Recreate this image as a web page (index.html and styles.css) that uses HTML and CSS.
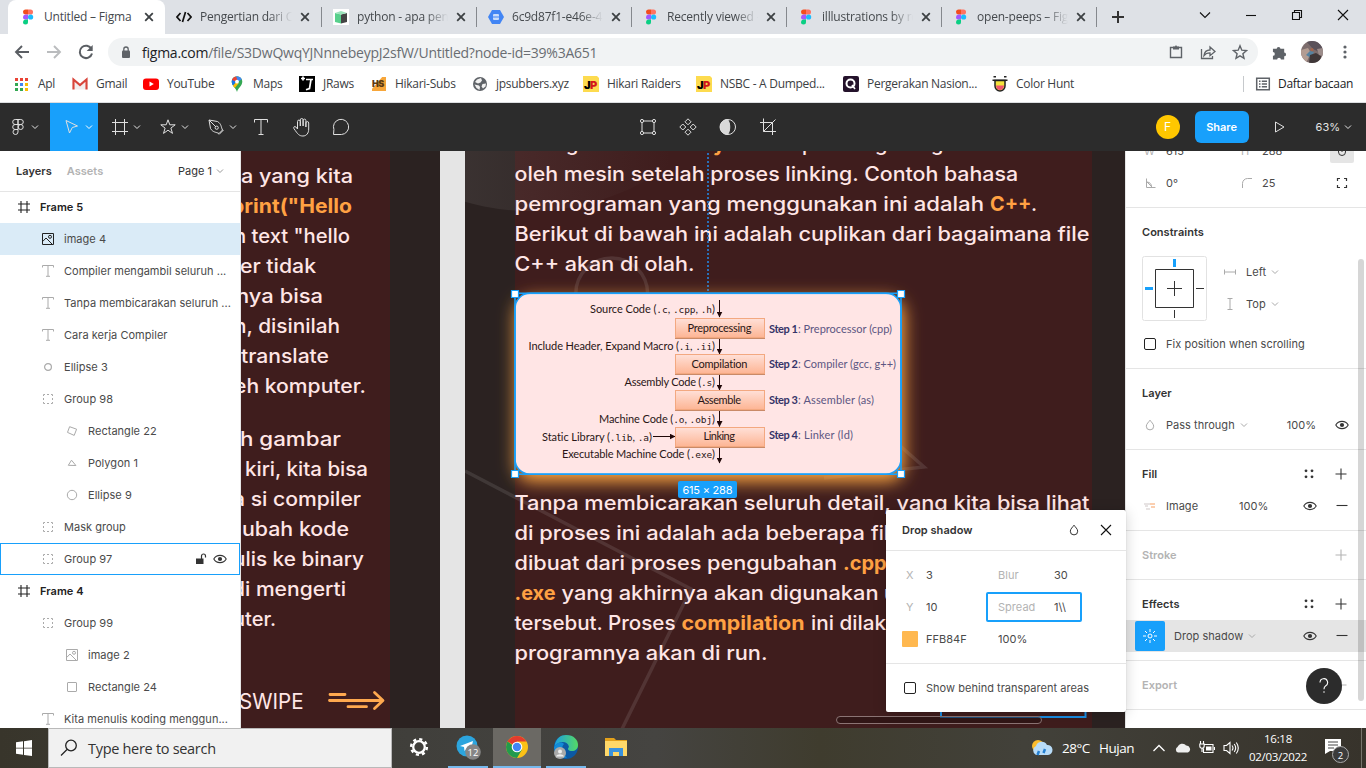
FILE: index.html
```html
<!DOCTYPE html>
<html lang="id">
<head>
<meta charset="utf-8">
<title>Untitled – Figma</title>
<link rel="stylesheet" href="styles.css">
</head>
<body>
<svg class="sprite" aria-hidden="true">
  <symbol id="figma" viewBox="0 0 16 16"><path fill="#f24e1e" d="M3 3a2.6 2.6 0 0 1 2.6-2.6H8v5.1H5.6A2.6 2.6 0 0 1 3 3z"/><path fill="#ff7262" d="M8 .4h2.5a2.55 2.55 0 0 1 0 5.1H8z"/><path fill="#a259ff" d="M3 8a2.6 2.6 0 0 1 2.6-2.5H8v5.1H5.6A2.6 2.6 0 0 1 3 8z"/><circle fill="#1abcfe" cx="10.6" cy="8" r="2.6"/><path fill="#0acf83" d="M3 13a2.6 2.6 0 0 1 2.6-2.5H8V13a2.5 2.5 0 0 1-5 0z"/></symbol>
  <symbol id="close" viewBox="0 0 16 16"><path d="M4.2 4.2l7.6 7.6M11.8 4.2l-7.6 7.6" fill="none" stroke="#3c4043" stroke-width="1.8"/></symbol>
  <symbol id="chev" viewBox="0 0 8 8"><path d="M1 2.5l3 3 3-3" fill="none" stroke="currentColor"/></symbol>
  <symbol id="frame" viewBox="0 0 12 12"><path d="M3 0v12M9 0v12M0 3h12M0 9h12" fill="none" stroke="currentColor" stroke-width="1.1"/></symbol>
  <symbol id="text" viewBox="0 0 12 12"><path d="M.5 2.5v-2h11v2M6 .5v10.5M4 11.3h4" fill="none" stroke="currentColor"/></symbol>
  <symbol id="image" viewBox="0 0 12 12"><path d="M.5.5h11v11H.5zM.8 8.4L4 5l6.5 6.5" fill="none" stroke="currentColor"/><circle cx="8" cy="3.8" r="1.5" fill="none" stroke="currentColor"/></symbol>
  <symbol id="group" viewBox="0 0 12 12"><path d="M1.5 3V1.5H3M5 1.5h2M9 1.5h1.5V3M10.5 5v2M10.5 9v1.5H9M7 10.5H5M3 10.5H1.5V9M1.5 7V5" fill="none" stroke="currentColor"/></symbol>
  <symbol id="dot" viewBox="0 0 12 12"><circle cx="6" cy="6" r="3.4" fill="none" stroke="currentColor" stroke-width="1.2"/></symbol>
  <symbol id="circle" viewBox="0 0 12 12"><circle cx="6" cy="6" r="4.7" fill="none" stroke="currentColor"/></symbol>
  <symbol id="rect" viewBox="0 0 12 12"><rect x="1.5" y="1.5" width="9" height="9" rx=".5" fill="none" stroke="currentColor"/></symbol>
  <symbol id="tilt" viewBox="0 0 12 12"><path d="M3.6 1.7l7 2.5-2.4 6.2-6.700-3z" fill="none" stroke="currentColor"/></symbol>
  <symbol id="poly" viewBox="0 0 12 12"><path d="M5.5 3.2L2.3 8.3l7.6.2z" fill="none" stroke="currentColor"/></symbol>
  <symbol id="eye" viewBox="0 0 14 10"><path d="M.8 5C3.5.2 10.5.2 13.2 5 10.5 9.8 3.5 9.8.8 5z" fill="none" stroke="currentColor" stroke-width="1.1"/><circle cx="7" cy="5" r="2.1" fill="currentColor"/></symbol>
  <symbol id="plus" viewBox="0 0 12 12"><path d="M6 .5v11M.5 6h11" fill="none" stroke="currentColor" stroke-width="1.1"/></symbol>
  <symbol id="minus" viewBox="0 0 12 12"><path d="M.5 5.5h11" fill="none" stroke="currentColor" stroke-width="1.1"/></symbol>
  <symbol id="dots" viewBox="0 0 12 12"><g fill="currentColor"><circle cx="3" cy="2.8" r="1.4"/><circle cx="9" cy="2.8" r="1.4"/><circle cx="3" cy="8.8" r="1.4"/><circle cx="9" cy="8.8" r="1.4"/></g></symbol>
  <symbol id="drop" viewBox="0 0 12 12"><path d="M6 1.2C4.8 3 2.3 5 2.3 7.2a3.7 3.7 0 0 0 7.4 0C9.7 5 7.2 3 6 1.2z" fill="none" stroke="currentColor"/></symbol>
  <symbol id="jp" viewBox="0 0 16 16"><path d="M0 0h14l2 2v14H0z" fill="#fddb4f"/></symbol>
</svg>

<header class="tabstrip">
  <div class="tab active"><svg class="fav"><use href="#figma"/></svg><span class="title">Untitled – Figma</span><svg class="x"><use href="#close"/></svg></div>
  <div class="tab"><svg class="fav" viewBox="0 0 16 16"><path d="M4.5 4L1 8l3.5 4M11.5 4L15 8l-3.5 4M9.5 3l-3 10" fill="none" stroke="#111" stroke-width="1.7"/></svg><span class="title">Pengertian dari Co</span><svg class="x"><use href="#close"/></svg></div>
  <div class="tab"><svg class="fav" viewBox="0 0 16 16"><path fill="#fff" d="M0 0h16v16H0z"/><path fill="#58d08c" d="M2 4l6 1.5v9L2 13z"/><path fill="#444" d="M8 5.5L14 4v9l-6 1.5z"/><path fill="#9be3ba" d="M2 4l6-2 6 2-6 1.5z"/></svg><span class="title">python - apa peng</span><svg class="x"><use href="#close"/></svg></div>
  <div class="tab"><svg class="fav" viewBox="0 0 16 16"><path fill="#4285f4" d="M4 1h8l4 7-4 7H4L0 8z"/><rect x="5" y="5" width="6" height="6" rx="1" fill="#c9dcfb"/><path d="M5 8h6" stroke="#4285f4"/></svg><span class="title">6c9d87f1-e46e-4b</span><svg class="x"><use href="#close"/></svg></div>
  <div class="tab"><svg class="fav"><use href="#figma"/></svg><span class="title">Recently viewed – F</span><svg class="x"><use href="#close"/></svg></div>
  <div class="tab"><svg class="fav"><use href="#figma"/></svg><span class="title">illlustrations by re</span><svg class="x"><use href="#close"/></svg></div>
  <div class="tab"><svg class="fav"><use href="#figma"/></svg><span class="title">open-peeps – Figm</span><svg class="x"><use href="#close"/></svg></div>
  <svg class="newtab" viewBox="0 0 14 14"><path d="M7 1v12M1 7h12" stroke="#333" stroke-width="2"/></svg>
  <div class="winctl">
    <svg viewBox="0 0 12 12"><path d="M1 3.500l5 5 5-5"/></svg>
    <svg viewBox="0 0 12 12"><path d="M1 6.500h10"/></svg>
    <svg viewBox="0 0 12 12"><path d="M1.500 3.500h7v7h-7zM3.500 3.500v-2h7v7h-2"/></svg>
    <svg viewBox="0 0 12 12"><path d="M1 1l10 10M11 1L1 11"/></svg>
  </div>
</header>

<div class="addressbar">
  <svg class="nav" viewBox="0 0 16 16"><path d="M8 2L2 8l6 6M2 8h13" fill="none" stroke="#5a5e63" stroke-width="1.9"/></svg>
  <svg class="nav" viewBox="0 0 16 16"><path d="M8 2l6 6-6 6M14 8H1" fill="none" stroke="#babcbe" stroke-width="1.9"/></svg>
  <svg class="nav" viewBox="0 0 16 16"><path d="M13.500 5A6.200 6.200 0 1 0 14 9.500" fill="none" stroke="#5a5e63" stroke-width="2"/><path d="M14.700 1v6h-6z" fill="#5a5e63"/></svg>
  <div class="omnibox">
    <svg class="lock" viewBox="0 0 10 13"><rect x="1" y="4.500" width="8" height="7.500" rx="1" fill="#5f6368"/><path d="M2.800 5V3.200a2.200 2.200 0 0 1 4.400 0V5" fill="none" stroke="#5f6368" stroke-width="1.300"/></svg>
    <span class="url"><b>figma.com</b>/file/S3DwQwqYJNnnebeypJ2sfW/Untitled?node-id=39%3A651</span>
    <svg class="oi" viewBox="0 0 16 16"><path d="M2.500 3.500h11v10h-11z" fill="none" stroke="#5f6368" stroke-width="1.400"/><path d="M5 2.500h2l1-1.500 1 1.500h2v3H5z" fill="#5f6368"/></svg>
    <svg class="oi" viewBox="0 0 16 16"><path d="M1.500 5v9.500h11V12M4 11.500C4.500 7.500 7 6 10 6V3l5 4.500-5 4.200V8.800C7.500 8.800 5.500 9.500 4 11.500z" fill="none" stroke="#5f6368" stroke-width="1.300"/></svg>
    <svg class="oi" viewBox="0 0 16 16"><path d="M8 1.800l1.800 4.400 4.700.4-3.600 3.100 1.100 4.600L8 11.800l-4 2.500 1.100-4.600L1.500 6.600l4.700-.4z" fill="none" stroke="#5f6368" stroke-width="1.400"/></svg>
  </div>
  <svg class="puzzle" viewBox="0 0 16 16"><path fill="#5f6368" d="M1 4h4a2 2 0 1 1 4 0h4v4a2 2 0 1 1 0 4v3.500H9.500a2 2 0 1 0-4 0H1V11.500a2 2 0 1 0 0-4z"/></svg>
  <svg class="avatar" viewBox="0 0 22 22"><clipPath id="av"><circle cx="11" cy="11" r="11"/></clipPath><g clip-path="url(#av)"><path fill="#7d6d6d" d="M0 0h22v22H0z"/><path fill="#b39c92" d="M0 9l7-2 3 5-5 10H0z"/><path fill="#5b525a" d="M5 0h11l6 6-4 5-6-3z"/><path fill="#57829f" d="M5 14l4-4 4 1-3 6z"/><path fill="#3f3738" d="M9 14l6-2 5 3-1 7H8z"/><circle cx="11" cy="8.500" r="1.600" fill="#a5664d"/><path fill="#9c8c8a" d="M16 8l6-1v8l-4-1z"/></g></svg>
  <svg class="more" viewBox="0 0 4 16"><g fill="#5f6368"><circle cx="2" cy="3" r="1.600"/><circle cx="2" cy="8" r="1.600"/><circle cx="2" cy="13" r="1.600"/></g></svg>
</div>

<nav class="bookmarks">
  <a><svg viewBox="0 0 16 16"><path fill="#ea4335" d="M1 2h3v3H1zM6 2h3v3H6zM11 2h3v3h-3z"/><path fill="#34a853" d="M1 7h3v3H1zM1 12h3v3H1zM6 12h3v3H6z"/><path fill="#4285f4" d="M6 7h3v3H6z"/><path fill="#fbbc04" d="M11 7h3v3h-3zM11 12h3v3h-3z"/></svg>Apl</a>
  <a><svg viewBox="0 0 16 16"><path d="M3 4v9.500h10V4L8 8.500z" fill="#f2eeee"/><path d="M1.500 13.500v-10L8 9l6.500-5.500v10" fill="none" stroke="#d8453b" stroke-width="2.200"/></svg>Gmail</a>
  <a><svg viewBox="0 0 16 16"><rect y="2.500" width="16" height="11.500" rx="3" fill="red"/><path fill="#fff" d="M6.500 5.500v5l4.300-2.500z"/></svg>YouTube</a>
  <a><svg viewBox="0 0 16 16"><clipPath id="pin"><path d="M8 16c-1-4-5.300-6-5.300-10.500a5.300 5.300 0 0 1 10.600 0C13.300 10 9 12 8 16z"/></clipPath><g clip-path="url(#pin)"><path fill="#34a853" d="M0 0h16v16H0z"/><path fill="#fbbc04" d="M2 11l6-6 1.500 2.500L5 13z"/><path fill="#1a73e8" d="M0 9V3l5-1 3 3-4 4.500z"/><path fill="#ea4335" d="M2 0h5L9 4 6.500 5.500 2 3.500z"/><path fill="#4285f4" d="M7 0h6v3L9 6z"/></g><circle cx="8" cy="5.700" r="1.900" fill="#fff"/></svg>Maps</a>
  <a><svg viewBox="0 0 16 16"><path d="M0 0h16v16H0z"/><path d="M7 3.500h7M12 3.500l-1.500 9-3.500 1.300M2 2.500h4M4 .5v4" fill="none" stroke="#fff" stroke-width="1.700"/></svg>JRaws</a>
  <a><svg viewBox="0 0 16 16"><path fill="#f7a63a" d="M1 1h14v14H1z"/><path fill="#fff" d="M0 0h12L0 14z"/><text x="1" y="10.500" class="hs">HS</text></svg>Hikari-Subs</a>
  <a><svg viewBox="0 0 16 16"><circle cx="8" cy="8" r="7" fill="#5f6368"/><path d="M9 2l-4 1.500L3 6l3 1.500 2.500-1L10 4.500zM2.500 8.500L7 9.500 8 11l-.5 3-3-2zM10.500 8l3.500-.5-.5 3-2.500 2-1.500-2z" fill="#f1f1f1"/></svg>jpsubbers.xyz</a>
  <a><svg viewBox="0 0 16 16"><use href="#jp"/><text x="1" y="12.500" class="jpt">J<tspan fill="#d5151b">P</tspan></text></svg>Hikari Raiders</a>
  <a><svg viewBox="0 0 16 16"><use href="#jp"/><text x="1" y="12.500" class="jpt">J<tspan fill="#d5151b">P</tspan></text></svg>NSBC - A Dumped...</a>
  <a><svg viewBox="0 0 16 16"><rect width="16" height="16" rx="2" fill="#24122b"/><circle cx="7.500" cy="7.500" r="4" fill="none" stroke="#fff" stroke-width="2"/><path d="M9 9l3 4" stroke="#fff" stroke-width="1.600"/></svg>Pergerakan Nasion...</a>
  <a><svg viewBox="0 0 16 16"><path d="M3 4.500V10a5 5 0 0 0 10 0V4.500z" fill="#f6e43c" stroke="#222" stroke-width="1.500"/><path d="M4 9.500h8a4 4.500 0 0 1-8 0z" fill="#f2566e"/><path d="M1.500.8h2.500M12 .8h2.500M.5 4.300h15" stroke="#222" stroke-width="1.500"/></svg>Color Hunt</a>
  <a class="reading"><svg viewBox="0 0 16 16"><path d="M1.700 2.200h12.600v11.600H1.700z" fill="none" stroke="#5f6368" stroke-width="1.500"/><path d="M4 5.200h1.500M4 8h1.500M4 10.800h1.500M6.800 5.200H12M6.800 8H12M6.800 10.800H12" stroke="#5f6368" stroke-width="1.400"/></svg>Daftar bacaan</a>
</nav>

<div class="toolbar">
  <div class="tool menu"><svg class="i18" viewBox="0 0 18 18"><path d="M9 1.500H6.200a2.500 2.500 0 0 0 0 5H9zM9 1.500h2.800a2.500 2.500 0 0 1 0 5H9zM9 6.500H6.200a2.500 2.500 0 0 0 0 5H9zM6.200 11.500A2.500 2.500 0 1 0 9 14v-2.500z"/><circle cx="11.700" cy="9" r="2.500"/></svg><svg class="c"><use href="#chev"/></svg></div>
  <div class="tool sel"><svg class="i18" viewBox="0 0 18 18"><path d="M3 2.500l11.500 5.500-5.200 1.500-2.800 5.500z"/></svg><svg class="c"><use href="#chev"/></svg></div>
  <div class="tool"><svg class="i18" viewBox="0 0 18 18"><path d="M4.500 1v16M13.500 1v16M1 4.500h16M1 13.500h16"/></svg><svg class="c"><use href="#chev"/></svg></div>
  <div class="tool"><svg class="i18" viewBox="0 0 18 18"><path d="M9 1.800l1.800 5h5.400l-4.300 3.300 1.600 5.300L9 12.200l-4.500 3.200 1.600-5.300L1.800 6.800h5.400z"/></svg><svg class="c"><use href="#chev"/></svg></div>
  <div class="tool"><svg class="i18" viewBox="0 0 18 18"><path d="M2 2l8.500 1.500C14.500 6 14 9 15.500 12L12 15.500C9 14 6 14.500 3.500 10.500zM2 2l7 7M12 16.500l4.500-4.500"/><circle cx="9.700" cy="9.700" r="1.600"/></svg><svg class="c"><use href="#chev"/></svg></div>
  <div class="tool one"><svg class="i18" viewBox="0 0 18 18"><path d="M2.500 4.500v-3h13v3M9 1.500v15M6.500 16.500h5"/></svg></div>
  <div class="tool one hand"><svg class="i20" viewBox="0 0 20 20"><path d="M5.500 12V4.500a1.400 1.400 0 0 1 2.800 0V9 2.900a1.400 1.400 0 0 1 2.800 0V9 3.500a1.400 1.400 0 0 1 2.800 0V10 6a1.400 1.400 0 0 1 2.800 0v6c0 4-2 7-5.800 7-3.500 0-5-1.500-9-7.500-.8-1.800 1-2.500 2-1.500L5.500 12"/></svg></div>
  <div class="tool one talk"><svg class="i18" viewBox="0 0 18 18"><path d="M1.500 16.500l.4-5A7.600 7.600 0 1 1 9.500 16.500z"/></svg></div>
  <div class="mid">
    <svg class="i18" viewBox="0 0 18 18"><path d="M3 4.500v9M15 4.500v9M4.500 3h9M4.500 15h9"/><circle cx="3" cy="3" r="1.600"/><circle cx="15" cy="3" r="1.600"/><circle cx="3" cy="15" r="1.600"/><circle cx="15" cy="15" r="1.600"/></svg>
    <svg class="i18" viewBox="0 0 18 18"><path d="M9 .8l3 3-3 3-3-3zM9 11.200l3 3-3 3-3-3zM3.800 6l3 3-3 3-3-3zM14.200 6l3 3-3 3-3-3z"/></svg>
    <svg class="i18" viewBox="0 0 18 18"><circle cx="9" cy="9" r="7.500"/><path d="M8.500 1.500a7.500 7.500 0 0 0 0 15c3-3.500 3-11.500 0-15z" fill="#d8d8d8"/></svg>
    <svg class="i18" viewBox="0 0 18 18"><path d="M4.500.5v13H17M1 4.500h12.500V17M4.500 13.500L16.500 1.500"/></svg>
  </div>
  <div class="right"><span class="me">F</span><span class="share">Share</span><svg class="play" viewBox="0 0 12 14"><path d="M1.500 2v10l8.500-5z"/></svg><span class="zoomv">63%</span><svg class="c"><use href="#chev"/></svg></div>
</div>

<main class="workspace">
  <aside class="layers">
    <div class="lhead"><b>Layers</b><b class="dim">Assets</b><span class="page">Page 1</span><svg class="c"><use href="#chev"/></svg></div>
    <div class="row top line"><svg><use href="#frame"/></svg><span>Frame 5</span></div>
    <div class="row on"><svg><use href="#image"/></svg><span>image 4</span></div>
    <div class="row"><svg><use href="#text"/></svg><span>Compiler mengambil seluruh ...</span></div>
    <div class="row"><svg><use href="#text"/></svg><span>Tanpa membicarakan seluruh ...</span></div>
    <div class="row"><svg><use href="#text"/></svg><span>Cara kerja Compiler</span></div>
    <div class="row"><svg><use href="#dot"/></svg><span>Ellipse 3</span></div>
    <div class="row"><svg><use href="#group"/></svg><span>Group 98</span></div>
    <div class="row deep"><svg><use href="#tilt"/></svg><span>Rectangle 22</span></div>
    <div class="row deep"><svg><use href="#poly"/></svg><span>Polygon 1</span></div>
    <div class="row deep"><svg><use href="#circle"/></svg><span>Ellipse 9</span></div>
    <div class="row"><svg><use href="#group"/></svg><span>Mask group</span></div>
    <div class="row hover"><svg><use href="#group"/></svg><span>Group 97</span><svg class="unlock" viewBox="0 0 12 12"><path fill="#333" d="M1 5.500h7.500V11H1z"/><path d="M6.500 6V3a2 2 0 0 1 4 0v1.500" fill="none" stroke="#333" stroke-width="1.200"/></svg><svg class="eye"><use href="#eye"/></svg></div>
    <div class="row top"><svg><use href="#frame"/></svg><span>Frame 4</span></div>
    <div class="row"><svg><use href="#group"/></svg><span>Group 99</span></div>
    <div class="row deep"><svg><use href="#image"/></svg><span>image 2</span></div>
    <div class="row deep"><svg><use href="#rect"/></svg><span>Rectangle 24</span></div>
    <div class="row"><svg><use href="#text"/></svg><span>Kita menulis koding menggun...</span></div>
  </aside>

  <svg class="canvas" viewBox="241 151 884 577">
    <defs>
      <linearGradient id="ell" x1="0" y1="0" x2="1" y2="0"><stop offset=".36" stop-color="#8a8484" stop-opacity=".16"/><stop offset=".8" stop-color="#8a8484" stop-opacity="0"/></linearGradient>
      <linearGradient id="box" x1="0" y1="0" x2="0" y2="1"><stop offset="0" stop-color="#ffe0d8"/><stop offset="1" stop-color="#fdb594"/></linearGradient>
      <filter id="glow" x="-20%" y="-30%" width="140%" height="160%"><feGaussianBlur stdDeviation="8.500"/></filter>
      <clipPath id="art"><path d="M465 151h660v577H465z"/></clipPath>
      <marker id="head" viewBox="0 0 6 6" refX="5.500" refY="3" markerWidth="6" markerHeight="6" markerUnits="userSpaceOnUse" orient="auto"><path d="M0 0l6 3-6 3z" fill="#200808"/></marker>
    </defs>
    <path fill="#e5e5e5" d="M241 151h884v577H241z"/>
    <path fill="#2b2221" d="M241 151h199v577H241zM465 151h660v577H465z"/>
    <path fill="#3f1d1d" d="M241 151h149v577H241zM515 151h577v577H515z"/>
    <g clip-path="url(#art)"><circle cx="530" cy="-24" r="235" fill="url(#ell)"/></g>
    <g class="deco"><circle cx="611.700" cy="294" r="36"/><path d="M465 471l226 118-69 140M890 437l34 30-100 11"/></g>

    <g class="body">
      <text x="241" y="182.500" textLength="112" lengthAdjust="spacingAndGlyphs">a yang kita</text>
      <text class="hl" x="231" y="212.500" textLength="121" lengthAdjust="spacingAndGlyphs">print("Hello</text>
      <text x="234" y="242.500" textLength="116" lengthAdjust="spacingAndGlyphs">n text "hello</text>
      <text x="240" y="272.500" textLength="76" lengthAdjust="spacingAndGlyphs">er tidak</text>
      <text x="236" y="302.500" textLength="87" lengthAdjust="spacingAndGlyphs">nya bisa</text>
      <text x="234" y="332.500" textLength="106" lengthAdjust="spacingAndGlyphs">n, disinilah</text>
      <text x="241" y="362.500" textLength="88" lengthAdjust="spacingAndGlyphs">translate</text>
      <text x="234" y="392.500" textLength="132" lengthAdjust="spacingAndGlyphs">eh komputer.</text>
      <text x="240" y="445.500" textLength="101" lengthAdjust="spacingAndGlyphs">h gambar</text>
      <text x="245" y="475.500" textLength="123" lengthAdjust="spacingAndGlyphs">kiri, kita bisa</text>
      <text x="233" y="505.500" textLength="128" lengthAdjust="spacingAndGlyphs">a si compiler</text>
      <text x="242" y="535.500" textLength="107" lengthAdjust="spacingAndGlyphs">ubah kode</text>
      <text x="233" y="565.500" textLength="131" lengthAdjust="spacingAndGlyphs">ulis ke binary</text>
      <text x="232" y="595.500" textLength="114" lengthAdjust="spacingAndGlyphs">di mengerti</text>
      <text x="233" y="625.500" textLength="43" lengthAdjust="spacingAndGlyphs">uter.</text>
      <text class="swipe" x="239" y="708.500" textLength="64.500" lengthAdjust="spacingAndGlyphs">SWIPE</text>
      <text x="566" y="151">g</text><text class="hl" x="713" y="151">y</text><text x="802" y="151">p</text><text x="875" y="151">g</text><text x="931" y="151">g</text>
      <text x="514.500" y="180.500" textLength="503.500" lengthAdjust="spacingAndGlyphs">oleh mesin setelah proses linking. Contoh bahasa</text>
      <text x="514.500" y="210.500" textLength="469.500" lengthAdjust="spacingAndGlyphs">pemrograman yang menggunakan ini adalah</text>
      <text class="hl" x="990" y="210.500" textLength="41.500" lengthAdjust="spacingAndGlyphs">C++</text><text x="1031" y="210.500">.</text>
      <text x="514.500" y="240.500" textLength="575" lengthAdjust="spacingAndGlyphs">Berikut di bawah ini adalah cuplikan dari bagaimana file</text>
      <text x="514.500" y="270.500" textLength="180" lengthAdjust="spacingAndGlyphs">C++ akan di olah.</text>
    </g>
    <path d="M708 153v139" stroke="#2a6fb8" stroke-width="2" stroke-dasharray="2 2"/>
    <rect x="516" y="298.500" width="388" height="183" rx="16" fill="#ffa943" filter="url(#glow)"/>
    <rect x="515" y="293" width="386" height="181" rx="15" fill="#ffe5e5"/>

    <g class="flow">
      <path d="M719.500 300v17"/><path d="M719.500 338v16"/><path d="M719.500 374v16"/><path d="M719.500 410v16.500"/><path d="M719.500 446v17"/><path d="M653 436.500h22"/>
      <g class="boxes"><rect x="675.500" y="318.500" width="89" height="19"/><rect x="675.500" y="354.500" width="89" height="19"/><rect x="675.500" y="390.500" width="89" height="19"/><rect x="675.500" y="427.500" width="89" height="19"/></g>
      <text x="590" y="313" textLength="125">Source Code (<tspan>.c</tspan>, <tspan>.cpp</tspan>, <tspan>.h</tspan>)</text>
      <text x="528.500" y="349.500" textLength="186.500">Include Header, Expand Macro (<tspan>.i</tspan>, <tspan>.ii</tspan>)</text>
      <text x="624.500" y="385.500" textLength="90.500">Assembly Code (<tspan>.s</tspan>)</text>
      <text x="599" y="422.500" textLength="116">Machine Code (<tspan>.o</tspan>, <tspan>.obj</tspan>)</text>
      <text x="542" y="440.500" textLength="110">Static Library (<tspan>.lib</tspan>, <tspan>.a</tspan>)</text>
      <text x="562" y="458" textLength="153">Executable Machine Code (<tspan>.exe</tspan>)</text>
      <text x="687.500" y="331.500" textLength="64">Preprocessing</text>
      <text x="691.500" y="368" textLength="56">Compilation</text>
      <text x="697.500" y="403.500" textLength="43.500">Assemble</text>
      <text x="703.500" y="440" textLength="31.500">Linking</text>
      <g class="steps">
        <text class="sb" x="769" y="332.500" textLength="29">Step 1</text><text x="798" y="332.500" textLength="94">: Preprocessor (cpp)</text>
        <text class="sb" x="769" y="368" textLength="29">Step 2</text><text x="798" y="368" textLength="98">: Compiler (gcc, g++)</text>
        <text class="sb" x="769" y="403.500" textLength="29">Step 3</text><text x="798" y="403.500" textLength="76">: Assembler (as)</text>
        <text class="sb" x="769" y="439" textLength="29">Step 4</text><text x="798" y="439" textLength="55">: Linker (ld)</text>
      </g>
    </g>

    <g class="body">
      <text x="514.500" y="510" textLength="575" lengthAdjust="spacingAndGlyphs">Tanpa membicarakan seluruh detail, yang kita bisa lihat</text>
      <text x="514.500" y="540" textLength="350.500" lengthAdjust="spacingAndGlyphs">di proses ini adalah ada beberapa</text><text x="871" y="540">file</text>
      <text x="514.500" y="570" textLength="322.500" lengthAdjust="spacingAndGlyphs">dibuat dari proses pengubahan</text><text class="hl" x="843" y="570">.cpp</text>
      <text class="hl" x="514.500" y="600" textLength="41" lengthAdjust="spacingAndGlyphs">.exe</text><text x="561.500" y="600" textLength="317" lengthAdjust="spacingAndGlyphs">yang akhirnya akan digunakan</text><text x="884" y="600">u</text>
      <text x="514.500" y="630" textLength="161" lengthAdjust="spacingAndGlyphs">tersebut. Proses</text><text class="hl" x="681.500" y="630" textLength="123" lengthAdjust="spacingAndGlyphs">compilation</text><text x="811" y="630" textLength="75" lengthAdjust="spacingAndGlyphs">ini dilak</text>
      <text x="514.500" y="660" textLength="253" lengthAdjust="spacingAndGlyphs">programnya akan di run.</text>
    </g>
    <g fill="none" stroke="#ffa94f" stroke-width="2.800" stroke-linecap="round" stroke-linejoin="round"><path d="M330 694.500h15M329.500 700.500h53M348 706.700h18.500M374.500 692.500l8.500 8-8.500 8"/></g>

    <path d="M941 700v17h144.500v-17" fill="none" stroke="#1b8fe6" stroke-width="2"/>
    <rect x="836.500" y="716.500" width="205" height="7" rx="3.500" fill="#231010" fill-opacity=".5" stroke="#8b7474"/>

    <g fill="#fff" stroke="#18a0fb">
      <rect x="515" y="293.300" width="386" height="180.900" rx="15" fill="none" stroke-width="1.600"/>
      <rect x="515" y="293.300" width="386" height="180.900" fill="none" stroke-width="1.600"/>
      <path d="M511.500 290.500h7v7h-7zM897.500 290.500h7v7h-7zM511.500 470.500h7v7h-7zM897.500 470.500h7v7h-7z" stroke-width="1.200"/>
    </g>
    <rect x="678" y="481" width="59" height="17" rx="2" fill="#18a0fb"/>
    <text class="dim-label" x="682.500" y="493.500" textLength="50">615 × 288</text>
  </svg>

  <aside class="props">
    <section class="size">
      <div class="p"><i>W</i><span class="v">615</span><i class="h">H</i><span>288</span><em class="link"><svg viewBox="0 0 12 12"><path d="M2.500 5.500v1.500a3.500 3.500 0 0 0 7 0V5.500M6 0v7" fill="none" stroke="#333"/></svg></em></div>
      <div class="p"><svg class="pi g"><path d="M2.500 1.500v9h9M2.500 4.500L8 10M3 5a5 5 0 0 1 4.500 5" fill="none" stroke="currentColor"/></svg><span class="v">0°</span><svg class="pi g"><path d="M1.500 11V6.500a5 5 0 0 1 5-5H11" fill="none" stroke="currentColor"/></svg><span class="rad">25</span><svg class="pi end"><path d="M1.500 4V1.500H4M8 1.500h2.500V4M10.500 8v2.500H8M4 10.500H1.500V8" fill="none" stroke="currentColor" stroke-width="1.200"/></svg></div>
    </section>
    <section>
      <h2>Constraints</h2>
      <div class="cons">
        <svg class="cbox" viewBox="0 0 65 65"><rect x=".5" y=".5" width="64" height="64" rx="2" fill="#fff" stroke="#e2e2e2"/><path d="M13.500 13.500h38v38h-38zM32.500 25v15M25 32.500h15M54 32.500h8M32.500 54v8" fill="none" stroke="#333"/><path d="M32.500 3v8M3 32.500h8" stroke="#18a0fb" stroke-width="3"/></svg>
        <div class="opts"><div><svg class="pi l"><path d="M.5 3.500v5M11.500 3.500v5M.5 6h11" fill="none" stroke="currentColor"/></svg>Left<svg class="c"><use href="#chev"/></svg></div><div><svg class="pi l"><path d="M3.500.5h5M3.500 11.500h5M6 .5v11" fill="none" stroke="currentColor"/></svg>Top<svg class="c"><use href="#chev"/></svg></div></div>
      </div>
      <div class="p"><span class="check"></span><span>Fix position when scrolling</span></div>
    </section>
    <section>
      <h2>Layer</h2>
      <div class="p"><svg class="pi g"><use href="#drop"/></svg><span>Pass through</span><svg class="c"><use href="#chev"/></svg><span class="pct a">100%</span><svg class="eye last"><use href="#eye"/></svg></div>
    </section>
    <section>
      <h2>Fill<svg class="pi"><use href="#dots"/></svg><svg class="pi"><use href="#plus"/></svg></h2>
      <div class="p"><svg class="pi g"><path d="M0 4h6M1 6h3M2 9h4" stroke="#cfc7c7"/><path d="M6 4h5M7 7h4" stroke="#fbcfb0" stroke-width="2"/></svg><span>Image</span><span class="pct b">100%</span><svg class="eye"><use href="#eye"/></svg><svg class="pi"><use href="#minus"/></svg></div>
    </section>
    <section class="off"><h2>Stroke<svg class="pi"><use href="#plus"/></svg></h2></section>
    <section>
      <h2>Effects<svg class="pi"><use href="#dots"/></svg><svg class="pi"><use href="#plus"/></svg></h2>
      <div class="p fx"><em class="sun"><svg viewBox="0 0 16 16"><circle cx="8" cy="8" r="2"/><path d="M8 1v3M8 12v3M1 8h3M12 8h3M3 3l2 2M11 11l2 2M13 3l-2 2M5 11l-2 2"/></svg></em><span>Drop shadow</span><svg class="c"><use href="#chev"/></svg><svg class="eye"><use href="#eye"/></svg><svg class="pi"><use href="#minus"/></svg></div>
    </section>
    <section class="off"><h2>Export<svg class="pi"><use href="#plus"/></svg></h2></section>
    <section></section>
    <div class="thumb"></div>
    <div class="help"><svg viewBox="0 0 12 16"><path d="M2 4.500a3.800 3.800 0 1 1 5.500 3.400C6 8.700 6 9.500 6 11.200M6 13.200v1.600" fill="none" stroke="#fff" stroke-width="1.100"/></svg></div>
  </aside>

  <div class="popup">
    <div class="phead"><b>Drop shadow</b><svg class="pi"><use href="#drop"/></svg><svg class="pi px" viewBox="0 0 12 12"><path d="M1 1l10 10M11 1L1 11" stroke="#111" stroke-width="1.100"/></svg></div>
    <div class="pgrid"><i>X</i><span>3</span><i>Blur</i><span>30</span><i>Y</i><span>10</span><div class="focus"><i>Spread</i><span>1\\</span></div><em class="sw"></em><span>FFB84F</span><span class="pp">100%</span></div>
    <div class="pfoot"><span class="check"></span>Show behind transparent areas</div>
  </div>
</main>

<footer class="taskbar">
  <div class="start"><svg viewBox="0 0 16 16"><path fill="#fff" d="M0 2.300l7-1v6.400H0zM8 1.200L16 0v7.700H8zM0 8.500h7v6.300l-7-1zM8 8.500h8V16l-8-1.100z"/></svg></div>
  <div class="search"><svg viewBox="0 0 18 18"><circle cx="11" cy="6.500" r="5.300" fill="none" stroke="#222" stroke-width="1.300"/><path d="M7 10.500L1 16.500" stroke="#222" stroke-width="1.300"/></svg>Type here to search</div>
  <div class="apps">
    <div class="app gear"><svg viewBox="0 0 24 24"><circle cx="12" cy="12" r="5.800" fill="none" stroke="#fff" stroke-width="2.300"/><circle cx="12" cy="12" r="7.900" fill="none" stroke="#fff" stroke-width="2.400" stroke-dasharray="3.100 3.100"/></svg></div>
    <div class="app run"><svg viewBox="0 0 26 26"><circle cx="12" cy="12" r="10.500" fill="#2ca5de"/><path fill="#fff" d="M5 12l13-5-2.500 11-4-3-2 2-.5-4z"/><circle cx="18" cy="18" r="7.800" fill="#868686"/><text x="18" y="22" text-anchor="middle" class="num">12</text></svg></div>
    <div class="app cur"><svg viewBox="0 0 24 24"><circle cx="12" cy="12" r="11" fill="#fbc116"/><path fill="#e33b2e" d="M12 12L2.500 6.500A11 11 0 0 1 21.500 6.500H12z"/><path fill="#229a4d" d="M2.500 6.500A11 11 0 0 0 12 23l5-8.500-5-1z"/><circle cx="12" cy="12" r="5.300" fill="#fff"/><circle cx="12" cy="12" r="4.200" fill="#4285f4"/></svg></div>
    <div class="app run"><svg viewBox="0 0 26 26"><defs><linearGradient id="eg"><stop offset="0" stop-color="#1c9fe0"/><stop offset="1" stop-color="#55d964"/></linearGradient></defs><circle cx="13" cy="13" r="12" fill="#0c59a4"/><path fill="url(#eg)" d="M1.500 12C3 4 8 1 13 1c8 0 12 5 12 10 0 4-3 6-6 6-4 0-5-2-3-4-1-6-9-7-14.500-1z"/><path fill="#128ad8" d="M1 13c3-6 9-5 10-3-3 3-3 9 3 13.500C7 25 1 20 1 13z"/><circle cx="7" cy="19" r="6" fill="#aaa"/><circle cx="7" cy="17.500" r="2" fill="#eee"/><path fill="#eee" d="M3 22.500c1-3 7-3 8 0z"/></svg></div>
    <div class="app"><svg viewBox="0 0 24 24"><path fill="#e3a11b" d="M1 3h9l2 2h11v4H1z"/><path fill="#ffd869" d="M1 6h22v15H1z"/><path fill="#3a92dd" d="M5 13h14v8h-4v-4H9v4H5z"/></svg></div>
  </div>
  <div class="weather"><svg viewBox="0 0 22 18"><circle cx="7" cy="7" r="6" fill="#fbbc2c"/><path fill="#b8dcf8" d="M5 16a5 5 0 0 1 0-9 6 6 0 0 1 11-1 5 5 0 0 1 1 10z"/><path d="M8 12l-1.500 4M14 10l-1.500 4" stroke="#237fd2" stroke-width="2.500"/></svg><span class="t1">28°C</span><span class="t2">Hujan</span></div>
  <div class="tray">
    <svg viewBox="0 0 16 16"><path d="M2.500 11L8 5.500l5.500 5.500" fill="none" stroke="#fff" stroke-width="1.300"/></svg>
    <svg viewBox="0 0 16 16"><path fill="#eee" d="M3 12.500a3 3 0 0 1-.5-5.500A5 5 0 0 1 11 5.500a3.700 3.700 0 0 1 2 7z"/></svg>
    <svg viewBox="0 0 16 16"><path d="M5.500 4.500h8.500v8H4.500v-4M15.500 7v3M1.500 1v3M4.500 1v3M.8 4h4.400v2a2 2 0 0 1-4.400 0zM3 8v4" fill="none" stroke="#fff" stroke-width="1.100"/><path fill="#fff" d="M7 6.500h5.500v4H7z"/></svg>
    <svg viewBox="0 0 16 16"><path d="M1 5.500h2.500L7 2.500v11l-3.500-3H1zM9 5.500q2 2.500 0 5M11.200 4q3 4 0 8M13.300 2.500q4 5.500 0 11" fill="none" stroke="#fff" stroke-width="1.100"/></svg>
  </div>
  <div class="clock"><span>16:18</span><span>02/03/2022</span></div>
  <div class="note"><svg viewBox="0 0 28 26"><path fill="#fff" d="M4 2h16v12H9l-5 3z"/><path d="M7 5h10M7 8h10M7 11h6" stroke="#444"/><circle cx="19.500" cy="17.500" r="8" fill="#3b3b3b" stroke="#aaa"/><text x="19.500" y="21.500" text-anchor="middle" class="num">2</text></svg></div>
</footer>
</body>
</html>
```
FILE: styles.css
```css
* { box-sizing: border-box; }
body { margin: 0; width: 1366px; height: 768px; overflow: hidden; background: #fff; font-family: Inter, sans-serif; font-size: 11px; color: #333; }
svg { display: block; flex: none; }
i, em { font-style: normal; }
.sprite { position: absolute; width: 0; height: 0; }

/* browser chrome */
.tabstrip { display: flex; align-items: center; height: 34px; padding-left: 11px; background: #dee1e6; font: 12px/16px "Open Sans", sans-serif; letter-spacing: -.2px; color: #45494d; }
.tab { display: flex; align-items: center; flex: none; width: 155px; height: 34px; padding-left: 11px; background: linear-gradient(#85888d, #85888d) right 7px / 1px 20px no-repeat; }
.tab.active { width: 157px; margin: 0 2px 0 -3px; padding-left: 12px; background: #fff; border-radius: 8px 8px 0 0; }
.tab:nth-child(2) .fav { margin-left: -2px; }
.tab:nth-child(2) .title, .tab.active .title { width: 92px; }
.fav { width: 16px; height: 16px; }
.title { width: 91px; margin-left: 8px; overflow: hidden; white-space: nowrap; -webkit-mask-image: linear-gradient(90deg, #000 75%, transparent); }
.active .title { -webkit-mask-image: none; }
.x { width: 16px; height: 16px; margin-left: 5px; }
.newtab { width: 14px; height: 14px; margin-left: 14px; }
.winctl { display: flex; gap: 34px; margin: -5px 17px 0 auto; }
.winctl svg { width: 12px; height: 12px; fill: none; stroke: #111; stroke-width: 1.1; }
.addressbar { display: flex; align-items: center; height: 35px; padding: 1px 0 0 14px; }
.nav { width: 16px; height: 16px; margin-right: 16px; }
.omnibox { display: flex; align-items: center; width: 1150px; height: 28px; margin-left: -2px; padding-left: 13px; border-radius: 14px; background: #f1f3f4; }
.lock { width: 10px; height: 13px; }
.url { flex: 1; margin-left: 11px; font: 14px "Open Sans", sans-serif; letter-spacing: -.24px; color: #696d72; }
.url b { font-weight: 400; color: #202124; }
.oi { width: 16px; height: 16px; margin-right: 16px; }
.oi:last-child { margin-right: 10px; }
.puzzle { width: 15px; height: 15px; margin-left: 14px; }
.avatar { width: 22px; height: 22px; margin-left: 14px; }
.more { width: 4px; height: 16px; margin-left: 20px; }
.bookmarks { display: grid; grid-template-columns: 58px 71px 86px 70px 72px 101px 111px 113px 147px 149px 251px 1fr; align-items: center; height: 34px; padding: 0 0 3px 14px; border-bottom: 1px solid #dcdee1; font: 12px/16px "Open Sans", sans-serif; letter-spacing: -.28px; white-space: nowrap; color: #3c4043; }
.bookmarks a { display: flex; align-items: center; gap: 8px; }
.bookmarks svg { width: 16px; height: 16px; }
.bookmarks .reading { padding-left: 11px; border-left: 1px solid #c6c9cc; gap: 7px; color: #202124; }
.hs { font: 900 9px Inter, sans-serif; fill: #5c3a12; letter-spacing: -.5px; }
.jpt { font: 900 11px Inter, sans-serif; letter-spacing: -.5px; }

/* editor toolbar */
.toolbar { display: flex; height: 48px; background: #2c2c2c; color: #e5e5e5; }
.toolbar svg { fill: none; stroke: #e0e0e0; stroke-width: 1; }
.toolbar .c { stroke: none; }
.i18 { width: 18px; height: 18px; }
.i20 { width: 20px; height: 20px; }
.c { width: 8px; height: 8px; }
.tool { display: flex; align-items: center; gap: 4px; width: 48px; padding-left: 13px; }
.tool.menu { width: 50px; padding-left: 9px; }
.tool.sel { background: #18a0fb; color: #fff; }
.tool.one { width: 40px; padding-left: 10px; }
.tool.hand { padding-left: 10px; }
.tool.talk { padding-left: 10px; }
.mid { display: flex; align-items: center; gap: 22px; margin-left: 277px; }
.right { display: flex; align-items: center; margin-left: auto; padding-right: 14px; }
.me { width: 24px; height: 24px; border-radius: 50%; background: #ffc700; color: #fff; font-size: 12px; text-align: center; line-height: 24px; }
.share { width: 54px; height: 32px; margin-left: 15px; border-radius: 6px; background: #18a0fb; color: #fff; font-weight: 600; line-height: 32px; text-align: center; }
.play { width: 12px; height: 14px; margin-left: 25px; }
.zoomv { margin: 0 4px 0 30px; }

/* workspace */
.workspace { position: relative; display: flex; height: 577px; overflow: hidden; background: #fff; letter-spacing: .03px; }
.layers { width: 241px; flex: none; border-right: 1px solid #e5e5e5; }
.lhead { display: flex; align-items: center; height: 40px; padding: 0 16px; }
.lhead b { font-weight: 600; }
.lhead .dim { margin-left: 15px; color: #b3b3b3; }
.page { margin: 0 4px 0 auto; }
.lhead .c { color: #999; }
.row { display: flex; align-items: center; height: 32px; padding-left: 42px; color: #4a4a4a; }
.row > svg { width: 12px; height: 12px; margin-right: 10px; color: #aaa; }
.row.deep { padding-left: 66px; }
.row.top { padding-left: 18px; font-weight: 600; color: #222; }
.row.top > svg { color: #222; }
.row.line { box-shadow: inset 0 1px #e5e5e5; }
.row.on { background: #daebf7; }
.row.on > svg { color: #222; }
.row.hover { padding-left: 41px; border: 1px solid #18a0fb; }
.row.hover .unlock { margin: 0 6px 0 auto; }
.row .eye { width: 14px; height: 10px; margin-right: 12px; color: #333; }
.canvas { width: 884px; height: 577px; }
.body text { font: 500 20px Inter, sans-serif; letter-spacing: 0; fill: #ffe6e6; }
.body .hl { font-weight: 700; fill: #ffa143; }
.body .swipe { font-weight: 400; font-size: 22px; }
.deco { fill: none; stroke: #fff; stroke-opacity: .1; stroke-width: 3.5; }
.flow text { font: 11px Lato, sans-serif; fill: #2a1616; }
.flow tspan { font-family: "DejaVu Sans Mono", monospace; font-size: 9.5px; }
.flow path { fill: none; stroke: #200808; marker-end: url(#head); }
.boxes rect { fill: url(#box); stroke: #f3a880; }
.boxes { filter: drop-shadow(0 1px .5px #c98a68); }
.flow .steps text { fill: #5c5682; }
.flow .steps .sb { font-weight: 700; fill: #353468; }
.dim-label { font: 11px Inter, sans-serif; fill: #fff; }

/* property panel */
.props { position: relative; width: 241px; border-left: 1px solid #e5e5e5; }
.props section { padding: 8px 0; border-top: 1px solid #e5e5e5; }
.props .size { margin-top: -16px; padding-top: 0; border: 0; }
.props h2 { display: flex; align-items: center; height: 32px; margin: 0; padding: 0 19px 0 16px; font-size: 11px; font-weight: 600; gap: 20px; }
.props h2 svg:first-of-type { margin-left: auto; }
.props .off h2, .off .pi { color: #b3b3b3; }
.p { display: flex; align-items: center; height: 32px; padding: 0 18px 0 18px; color: #4a4a4a; }
.p i { width: 22px; color: #b3b3b3; }
.p .v { width: 75px; }
.p .h { width: 21px; }
.link { width: 24px; height: 24px; margin: 0 -6px 0 auto; padding: 6px; background: #e5e5e5; border-radius: 2px; }
.link svg { width: 12px; height: 12px; }
.pi { width: 12px; height: 12px; color: #333; }
.pi.g { color: #aaa; margin-right: 10px; }
.pi.end { margin-left: auto; }
.p .rad { margin-left: -1px; }
.cons { display: flex; gap: 16px; height: 80px; padding: 8px 0 0 16px; }
.cbox { width: 65px; height: 65px; }
.opts > div { display: flex; align-items: center; height: 32px; color: #4a4a4a; }
.pi.l { color: #aaa; margin: 0 10px 0 1px; }
.props .c { margin-left: 5px; color: #aaa; }
.check { width: 12px; height: 12px; margin-right: 10px; border: 1px solid #222; border-radius: 2px; }
.pct.a { margin-left: 39px; }
.pct.b { margin-left: 41px; }
.eye { width: 14px; height: 10px; color: #333; }
.p .eye { margin: 0 19px 0 auto; }
.p .eye.last { margin-right: -1px; }
.fx { padding-left: 9px; background: #e5e5e5; }
.sun { width: 30px; height: 30px; margin-right: 9px; padding: 7px; background: #18a0fb; border-radius: 2px; }
.sun svg { width: 16px; height: 16px; fill: none; stroke: #fff; }
.thumb { position: absolute; top: 108px; right: 2px; width: 6px; height: 442px; border-radius: 3px; background: rgba(0,0,0,.16); }
.help { position: absolute; left: 180px; top: 517px; width: 36px; height: 36px; padding: 10px 12px; border-radius: 50%; background: #2c2c2c; }
.help svg { width: 12px; height: 16px; }

/* floating effect editor */
.popup { position: absolute; left: 886px; top: 359px; width: 240px; height: 202px; background: #fff; border-radius: 2px; box-shadow: 0 2px 14px rgba(0,0,0,.18), 0 0 1px rgba(0,0,0,.3); color: #4a4a4a; }
.phead { display: flex; align-items: center; height: 41px; padding: 0 14px 0 16px; border-bottom: 1px solid #e5e5e5; }
.phead b { margin-right: auto; font-weight: 600; color: #333; }
.phead .px { margin-left: 20px; }
.pgrid { display: grid; grid-template: repeat(3, 32px) / 20px 72px 56px 60px; align-items: center; height: 112px; padding: 8px 0 0 20px; }
.pgrid i { color: #b3b3b3; }
.focus { grid-column: 3 / 5; display: flex; align-items: center; width: 96px; height: 30px; margin-left: -12px; padding-left: 10px; border: 2px solid #18a0fb; border-radius: 2px; }
.focus i { width: 56px; }
.sw { width: 16px; height: 16px; margin-left: -4px; background: #ffb84f; border-radius: 1px; }
.pfoot { display: flex; align-items: center; height: 49px; padding-left: 18px; border-top: 1px solid #e5e5e5; }

/* desktop taskbar */
.taskbar { display: flex; height: 40px; padding-right: 4px; color: #fff; font-family: "Open Sans", sans-serif; background: linear-gradient(90deg, #38352b 0, #403f3b 30%, #454441 48%, #3f3c2e 60%, #42413a 75%, #37332b 100%); }
.start { width: 48px; padding: 12px 16px; }
.start svg { width: 16px; height: 16px; }
.search { display: flex; align-items: center; width: 344px; padding-left: 11px; gap: 10px; background: #f1f1f1; border: 1px solid #b9b9b9; color: #333; font-size: 14.5px; letter-spacing: -.3px; }
.search svg { width: 18px; height: 18px; }
.apps { display: flex; padding-left: 2px; }
.app { display: flex; align-items: center; justify-content: center; width: 49px; border-bottom: 2px solid transparent; }
.app svg { width: 24px; height: 24px; }
.app.run { width: 40px; margin: 0 5px; border-color: #76b9ed; }
.app.run svg { width: 26px; height: 26px; }
.app.cur { width: 48px; border-color: #76b9ed; background: #6b6964; }
.num { font: 9.5px "Open Sans", sans-serif; fill: #fff; letter-spacing: 0; }
.weather { display: flex; align-items: center; width: 116px; margin-left: auto; font-size: 13.5px; letter-spacing: -.45px; }
.weather svg { width: 22px; height: 18px; }
.t1 { width: 28px; margin: 0 9px 0 9px; }
.tray { display: flex; align-items: center; gap: 8px; margin-left: 4px; }
.tray svg { width: 16px; height: 16px; }
.clock { display: flex; flex-direction: column; justify-content: center; width: 66px; margin-left: 6px; text-align: center; font-size: 11.5px; line-height: 18px; letter-spacing: -.3px; }
.note { width: 51px; padding: 9px 0 0 10px; border-right: 1px solid #76746c; }
.note svg { width: 28px; height: 26px; }
```
